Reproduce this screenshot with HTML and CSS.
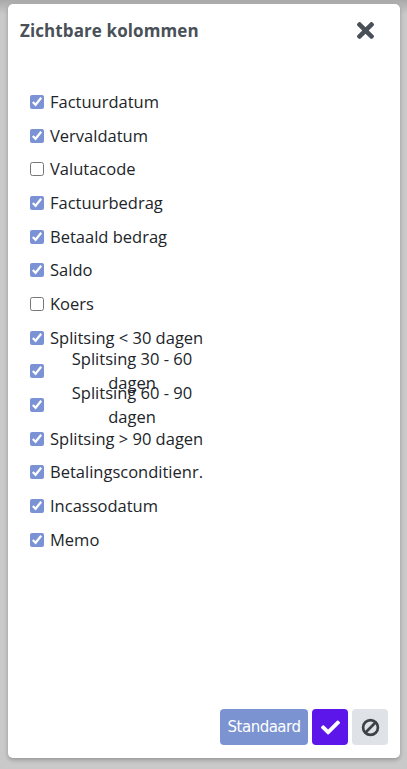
FILE: index.html
```html
<!DOCTYPE html>
<html lang="nl">
<head>
<meta charset="utf-8">
<link rel="stylesheet" href="styles.css">
</head>
<body>
<div class="backdrop">
  <div class="modal">
    <div class="modal-header">
      <h2 class="modal-title">Zichtbare kolommen</h2>
      <button class="close" type="button" aria-label="Sluiten">
        <svg viewBox="0 80 352 352" width="17" height="17"><path fill="currentColor" d="M242.72 256l100.07-100.07c12.28-12.28 12.28-32.19 0-44.48l-22.24-22.24c-12.28-12.28-32.19-12.28-44.48 0L176 189.28 75.930 89.21c-12.28-12.280-32.19-12.28-44.48 0L9.21 111.45c-12.28 12.28-12.28 32.19 0 44.48L109.28 256 9.21 356.07c-12.28 12.28-12.28 32.19 0 44.48l22.24 22.240c12.28 12.28 32.2 12.28 44.48 0L176 322.72l100.07 100.07c12.28 12.28 32.2 12.28 44.48 0l22.24-22.24c12.28-12.28 12.28-32.19 0-44.48L242.72 256z"/></svg>
      </button>
    </div>
    <div class="modal-body">
      <label class="row"><input type="checkbox" checked><span class="lbl">Factuurdatum</span></label>
      <label class="row"><input type="checkbox" checked><span class="lbl">Vervaldatum</span></label>
      <label class="row"><input type="checkbox"><span class="lbl">Valutacode</span></label>
      <label class="row"><input type="checkbox" checked><span class="lbl">Factuurbedrag</span></label>
      <label class="row"><input type="checkbox" checked><span class="lbl">Betaald bedrag</span></label>
      <label class="row"><input type="checkbox" checked><span class="lbl">Saldo</span></label>
      <label class="row"><input type="checkbox"><span class="lbl">Koers</span></label>
      <label class="row"><input type="checkbox" checked><span class="lbl">Splitsing &lt; 30 dagen</span></label>
      <label class="row"><input type="checkbox" checked><span class="lbl">Splitsing 30 - 60 dagen</span></label>
      <label class="row"><input type="checkbox" checked><span class="lbl">Splitsing 60 - 90 dagen</span></label>
      <label class="row"><input type="checkbox" checked><span class="lbl">Splitsing &gt; 90 dagen</span></label>
      <label class="row"><input type="checkbox" checked><span class="lbl">Betalingsconditienr.</span></label>
      <label class="row"><input type="checkbox" checked><span class="lbl">Incassodatum</span></label>
      <label class="row"><input type="checkbox" checked><span class="lbl">Memo</span></label>
    </div>
    <div class="modal-footer">
      <button class="btn btn-default" type="button">Standaard</button>
      <button class="btn btn-ok" type="button" aria-label="OK">
        <svg viewBox="0 64 512 384" width="19" height="15"><path fill="currentColor" d="M173.898 439.404l-166.4-166.4c-9.997-9.997-9.997-26.206 0-36.204l36.203-36.204c9.997-9.998 26.207-9.998 36.204 0L192 312.69 432.095 72.596c9.997-9.997 26.207-9.997 36.204 0l36.203 36.204c9.997 9.997 9.997 26.206 0 36.204l-294.4 294.401c-9.998 9.997-26.207 9.997-36.204-.001z"/></svg>
      </button>
      <button class="btn btn-cancel" type="button" aria-label="Annuleren">
        <svg viewBox="0 0 20 20" width="19" height="19"><circle cx="10" cy="10" r="7.8" fill="none" stroke="currentColor" stroke-width="2.8"/><line x1="4.8" y1="15.2" x2="15.2" y2="4.8" stroke="currentColor" stroke-width="2.8"/></svg>
      </button>
    </div>
  </div>
</div>
</body>
</html>
```
FILE: styles.css
```css
html, body {
  margin: 0;
  padding: 0;
}
body {
  background: #c9c9c9;
  font-family: "Open Sans", "Noto Sans", sans-serif;
  color: #212529;
}
.backdrop {
  height: 769px;
  box-sizing: border-box;
  padding: 4px 7px 11px 8px;
  background: linear-gradient(to bottom, #a9a9a9 0px, #c9c9c9 14px);
}
.modal {
  height: 754px;
  background: #fff;
  border-radius: 5px;
  box-shadow: 0 2px 4px rgba(0,0,0,0.25);
  display: flex;
  flex-direction: column;
}
.modal-header {
  display: flex;
  align-items: center;
  justify-content: space-between;
  padding: 8px 26px 0 12px;
  height: 36px;
}
.modal-title {
  margin: 0;
  font-size: 17px;
  font-weight: 700;
  color: #495057;
  letter-spacing: 0.1px;
}
.close {
  border: 0;
  background: none;
  padding: 0;
  color: #495057;
  display: flex;
}
.modal-body {
  flex: 1;
  padding: 37px 0 0 22px;
}
.row {
  display: flex;
  align-items: center;
  height: 33.7px;
  font-size: 16.5px;
}
.row input {
  margin: 0 6px 0 0;
  width: 14px;
  height: 14px;
  accent-color: #7b93d4;
}
.lbl {
  max-width: 164px;
  text-align: center;
  line-height: 24px;
  white-space: normal;
}
.modal-footer {
  display: flex;
  justify-content: flex-end;
  gap: 4px;
  padding: 0 12px 13px 0;
}
.btn {
  height: 36px;
  border: 0;
  border-radius: 4px;
  display: flex;
  align-items: center;
  justify-content: center;
  padding: 0;
}
.btn-default {
  width: 88px;
  background: #7b93d1;
  color: #fff;
  font-family: "DejaVu Sans", sans-serif;
  font-size: 15px;
  letter-spacing: -0.5px;
}
.btn-ok {
  width: 36px;
  background: #5d16ea;
  color: #fff;
}
.btn-cancel {
  width: 36px;
  background: #dfe2e6;
  color: #3e4247;
}
```
